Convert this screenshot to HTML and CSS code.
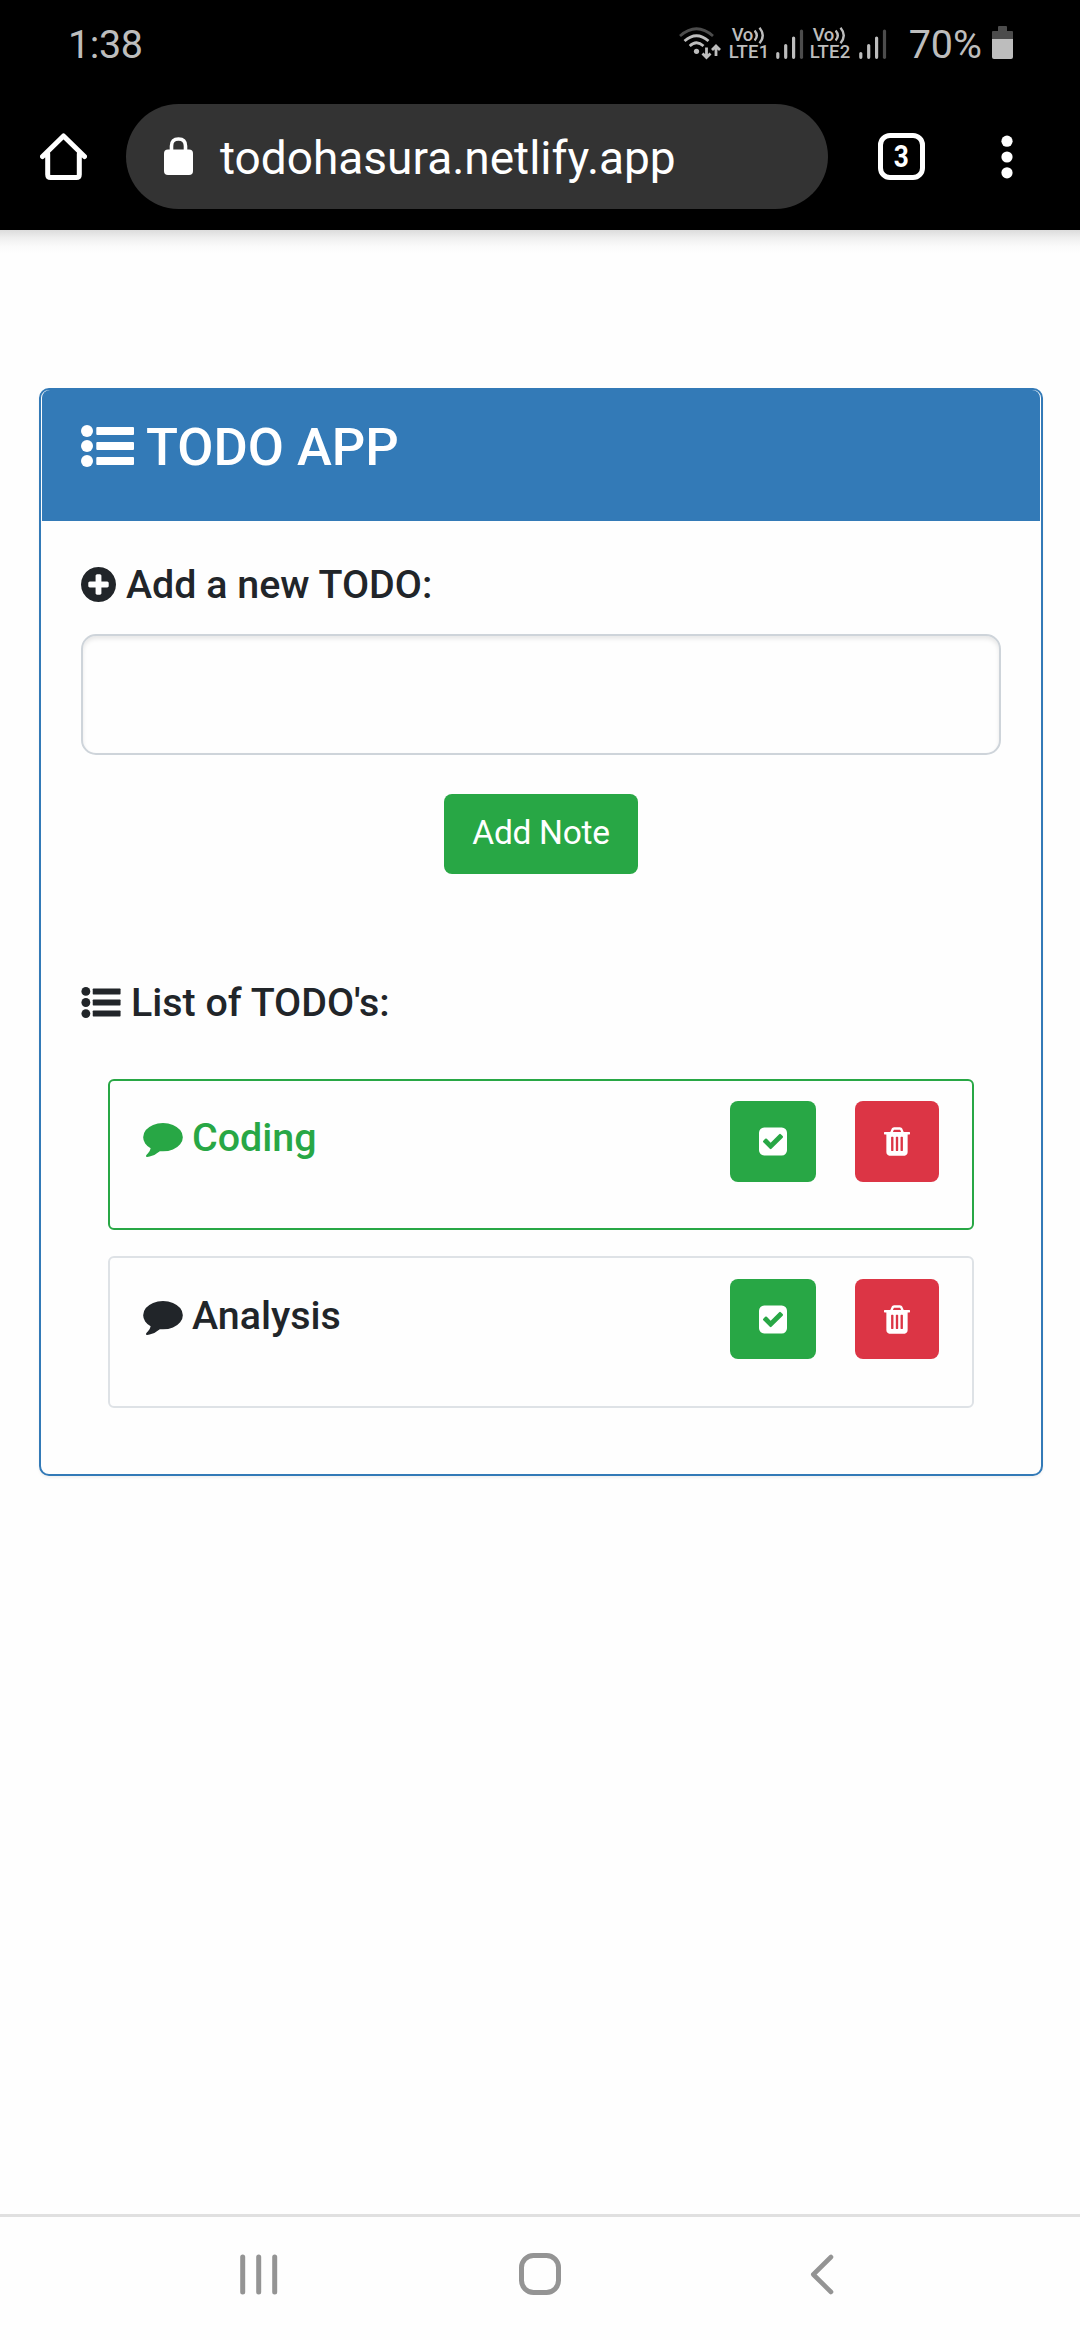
FILE: index.html
```html
<!DOCTYPE html>
<html lang="en">
<head>
<meta charset="utf-8">
<title>TODO APP</title>
<link rel="stylesheet" href="styles.css">
</head>
<body>
<svg class="defs" width="0" height="0" aria-hidden="true">
  <symbol id="list" viewBox="0 0 53 42">
    <circle cx="6" cy="6" r="6"/><circle cx="6" cy="21" r="6"/><circle cx="6" cy="36" r="6"/>
    <rect x="15.3" y="2" width="37.7" height="8" rx="1"/><rect x="15.3" y="17" width="37.7" height="8" rx="1"/><rect x="15.3" y="32" width="37.7" height="8" rx="1"/>
  </symbol>
  <symbol id="plus" viewBox="128 128 1536 1536"><path d="M1344 960v-128q0-26-19-45t-45-19h-256v-256q0-26-19-45t-45-19h-128q-26 0-45 19t-19 45v256h-256q-26 0-45 19t-19 45v128q0 26 19 45t45 19h256v256q0 26 19 45t45 19h128q26 0 45-19t19-45v-256h256q26 0 45-19t19-45zm320-64q0 209-103 385.5t-279.5 279.5-385.5 103-385.5-103-279.5-279.5-103-385.5 103-385.5 279.5-279.5 385.5-103 385.5 103 279.5 279.5 103 385.5z"/></symbol>
  <symbol id="comment" viewBox="0 256 1792 1536"><path d="M1792 896q0 174-120 321.5t-326 233-450 85.500q-70 0-145-8-198 175-460 242-49 14-114 22-17 2-30.5-9t-17.5-29v-1q-3-4-.5-12t2-10 4.5-9.500l6-9 7-8.500 8-9q7-8 31-34.500t34.500-38 31-39.500 32.500-51 27-59 26-76q-157-89-247.500-220t-90.500-281q0-174 120-321.500t326-233 450-85.500 450 85.500 326 233 120 321.500z"/></symbol>
  <symbol id="check" viewBox="128 128 1536 1536"><path d="M813 1299l614-614q19-19 19-45t-19-45l-102-102q-19-19-45-19t-45 19l-467 467-211-211q-19-19-45-19t-45 19l-102 102q-19 19-19 45t19 45l358 358q19 19 45 19t45-19zm851-883v960q0 119-84.500 203.500t-203.500 84.500h-960q-119 0-203.500-84.500t-84.500-203.500v-960q0-119 84.500-203.500t203.500-84.500h960q119 0 203.500 84.500t84.500 203.500z"/></symbol>
  <symbol id="trash" viewBox="192 128 1408 1536"><path d="M704 1376v-704q0-14-9-23t-23-9h-64q-14 0-23 9t-9 23v704q0 14 9 23t23 9h64q14 0 23-9t9-23zm256 0v-704q0-14-9-23t-23-9h-64q-14 0-23 9t-9 23v704q0 14 9 23t23 9h64q14 0 23-9t9-23zm256 0v-704q0-14-9-23t-23-9h-64q-14 0-23 9t-9 23v704q0 14 9 23t23 9h64q14 0 23-9t9-23zm-544-992h448l-48-117q-7-9-17-11h-317q-10 2-17 11zm928 32v64q0 14-9 23t-23 9h-96v948q0 83-47 143.500t-113 60.500h-832q-66 0-113-58.500t-47-141.500v-952h-96q-14 0-23-9t-9-23v-64q0-14 9-23t23-9h309l70-167q15-37 54-63t79-26h320q40 0 79 26t54 63l70 167h309q14 0 23 9t9 23z"/></symbol>
  <symbol id="bars" viewBox="0 0 28 30">
    <g stroke-width="3.2" stroke-linecap="round" stroke="#bdbdbd"><path d="M1.800 24.600v3.700M9.700 16.600v11.700M17.600 9v19.300"/><path stroke="#4c4c4c" d="M25.500 2v26.300"/></g>
  </symbol>
  <symbol id="waves" viewBox="0 0 11 17">
    <path d="M.6 3.500Q5 8.500 .6 13.500M5.500 .8Q12 8.500 5.500 16.200" fill="none" stroke="#bdbdbd" stroke-width="2.400"/>
  </symbol>
</svg>

<header class="chrome">
  <div class="status">
    <span class="clock">1:38</span>
    <div class="indicators">
      <svg class="wifi" viewBox="0 0 42 33">
        <g fill="none" stroke-width="2.800">
          <path stroke="#4c4c4c" d="M1 9Q17.500-5.500 34 9"/>
          <path stroke="#bdbdbd" d="M5.500 14Q17.500 3.500 29.500 14M10.700 19Q17.500 12.500 24.500 19M27.500 20.500v10M23.500 26.500l4 4 4-4M37 29V19M33 23l4-4 4 4"/>
        </g>
        <circle cx="17.500" cy="24.300" r="2.600" fill="#bdbdbd"/>
      </svg>
      <div class="lte"><span class="vo">Vo<svg class="waves"><use href="#waves"/></svg></span><span class="net">LTE1</span></div>
      <svg class="bars"><use href="#bars"/></svg>
      <div class="lte lte-two"><span class="vo">Vo<svg class="waves"><use href="#waves"/></svg></span><span class="net">LTE2</span></div>
      <svg class="bars"><use href="#bars"/></svg>
      <span class="percent">70%</span>
      <svg class="battery" viewBox="0 0 21 33"><path fill="#4c4c4c" d="M6 1q0-1 1-1h7q1 0 1 1v4h5q1 0 1 1v7H0V6q0-1 1-1h5z"/><path fill="#bdbdbd" d="M0 13h21v18q0 2-2 2H2q-2 0-2-2z"/></svg>
    </div>
  </div>
  <div class="toolbar">
    <svg class="home" viewBox="0 0 47 47" fill="none" stroke="#fff" stroke-width="5" stroke-linejoin="round" stroke-linecap="round"><path d="M2.500 23.500L23.500 3l21 20.500M7.700 21v20.500q0 3 3 3h25.600q3 0 3-3V21"/></svg>
    <div class="omnibox">
      <svg class="lock" viewBox="0 0 29 38"><rect y="12.500" width="29" height="25.500" rx="4" fill="#fff"/><path d="M7.500 15V9q0-7 7-7t7 7v6" fill="none" stroke="#fff" stroke-width="3.600"/></svg>
      <span class="url">todohasura.netlify.app</span>
    </div>
    <span class="tabs"><span class="tab-count">3</span></span>
    <svg class="dots" viewBox="0 0 12 44" fill="#fff"><circle cx="6" cy="6.200" r="5.600"/><circle cx="6" cy="22" r="5.600"/><circle cx="6" cy="37.800" r="5.600"/></svg>
  </div>
</header>

<main class="page">
  <section class="card">
    <h1 class="card-header"><svg class="i-list-lg"><use href="#list"/></svg><span class="title">TODO APP</span></h1>
    <div class="card-body">
      <h2 class="heading"><svg class="i-plus"><use href="#plus"/></svg><span class="text">Add a new TODO:</span></h2>
      <input class="field" type="text" aria-label="New todo">
      <button class="add">Add Note</button>
      <h2 class="heading heading-list"><svg class="i-list"><use href="#list"/></svg><span class="text">List of TODO's:</span></h2>
      <ul class="items">
        <li class="item done">
          <span class="label"><svg class="i-comment"><use href="#comment"/></svg><span class="text">Coding</span></span>
          <button class="btn btn-check" aria-label="Complete"><svg class="i-check"><use href="#check"/></svg></button>
          <button class="btn btn-trash" aria-label="Delete"><svg class="i-trash"><use href="#trash"/></svg></button>
        </li>
        <li class="item">
          <span class="label"><svg class="i-comment"><use href="#comment"/></svg><span class="text">Analysis</span></span>
          <button class="btn btn-check" aria-label="Complete"><svg class="i-check"><use href="#check"/></svg></button>
          <button class="btn btn-trash" aria-label="Delete"><svg class="i-trash"><use href="#trash"/></svg></button>
        </li>
      </ul>
    </div>
  </section>
</main>

<nav class="navbar">
  <svg class="nav-recents" viewBox="0 0 38 41" stroke="#949494" stroke-width="5" stroke-linecap="round"><path d="M2.700 3v35M18.700 3v35M34.700 3v35"/></svg>
  <svg class="nav-home" viewBox="0 0 42 42"><rect x="2.500" y="2.500" width="37" height="37" rx="12" fill="none" stroke="#949494" stroke-width="5"/></svg>
  <svg class="nav-back" viewBox="0 0 24 41" fill="none" stroke="#949494" stroke-width="4.600" stroke-linecap="round" stroke-linejoin="round"><path d="M21 3L3.300 20.500 21 38"/></svg>
</nav>
</body>
</html>
```
FILE: styles.css
```css
* { box-sizing: border-box; }

body {
  margin: 0;
  height: 2340px;
  display: flex;
  flex-direction: column;
  background: #fefefe;
  font-family: Roboto, "Liberation Sans", sans-serif;
  color: #212529;
}

svg { display: block; flex: none; fill: currentColor; }
.defs { display: none; }
button, input { font: inherit; padding: 0; }
h1, h2, ul { margin: 0; padding: 0; }

/* Browser chrome */
.chrome {
  height: 230px;
  flex: none;
  background: #000;
  color: #fff;
}

.status {
  height: 88px;
  padding: 0 67px 0 68px;
  display: flex;
  align-items: center;
  justify-content: space-between;
  color: #bdbdbd;
  font-size: 39.5px;
}

.clock { letter-spacing: -.4px; }
.indicators { display: flex; align-items: center; }
.wifi { width: 42px; height: 33px; margin: 0 8px 2px 0; fill: none; }
.lte { width: 41px; height: 34px; display: flex; flex-direction: column; font-weight: 500; }
.lte-two { width: 43px; }
.vo { height: 17px; display: flex; padding-left: 3px; font-size: 18.5px; line-height: 17px; letter-spacing: -.4px; }
.waves { width: 11px; height: 17px; margin-left: 1px; overflow: visible; }
.net { font-size: 18.5px; line-height: 17px; letter-spacing: .2px; }
.bars { width: 28px; height: 30px; margin: 0 6px 1px 6px; }
.percent { margin: 0 10px 0 16px; }
.battery { width: 21px; height: 33px; margin-bottom: 3px; }

.toolbar {
  padding: 16px 67px 0 40px;
  display: flex;
  align-items: center;
}

.home { width: 47px; height: 47px; fill: none; }

.omnibox {
  width: 702px;
  height: 105px;
  margin-left: 39px;
  padding-left: 38px;
  display: flex;
  align-items: center;
  border-radius: 53px;
  background: #333;
}

.lock { width: 29px; height: 38px; margin-bottom: 2px; }
.url { margin-left: 27px; padding-top: 3px; font-size: 46px; }

.tabs {
  width: 47px;
  height: 47px;
  margin-left: 50px;
  display: flex;
  justify-content: center;
  border: 5px solid #fff;
  border-radius: 12px;
  font-size: 32px;
  font-weight: 700;
  line-height: 37px;
}

.tab-count { transform: scaleX(.82); }

.dots { width: 12px; height: 44px; margin-left: auto; }

/* Page */
.page {
  flex: 1;
  padding: 158px 37px 0 39px;
  background: linear-gradient(#dcdcdc, #efefef 8px, #fafafa 16px, #fefefe 24px);
}

.card {
  border: 2px solid #337ab7;
  border-radius: 10px;
  background: #fefefe;
  box-shadow: 0 2px 3px rgba(0, 0, 0, .05);
}

.card-header {
  height: 131px;
  margin: 0 1px;
  padding: 26px 39px 0;
  display: flex;
  gap: 12px;
  border-radius: 8px 8px 0 0;
  background: #337ab7;
  color: #fff;
  font-size: 52.5px;
  font-weight: 500;
  line-height: 62px;
}

.i-list-lg { width: 53px; height: 42px; margin-top: 9px; }

.card-body { padding: 40px 40px 66px; }

.heading {
  height: 46px;
  display: flex;
  align-items: center;
  font-size: 39.4px;
  font-weight: 500;
  line-height: 46px;
}

.text { padding-top: 1px; }

.i-plus { width: 35px; height: 35px; margin-right: 10px; }

.field {
  display: block;
  width: 920px;
  height: 121px;
  margin-top: 27px;
  border: 2px solid #ced4da;
  border-radius: 15px;
  background: #fefefe;
  box-shadow: inset 0 3px 4px rgba(0, 0, 0, .09);
}

.add {
  display: block;
  width: 194px;
  height: 80px;
  margin: 39px auto 0;
  padding-bottom: 2px;
  border: 0;
  border-radius: 8px;
  background: #28a745;
  color: #fff;
  font-size: 33.5px;
  line-height: 78px;
  letter-spacing: -.3px;
}

.heading-list { margin-top: 105px; }
.i-list { width: 40px; height: 31px; margin-right: 10px; }

.items {
  margin: 54px 27px 0;
  display: flex;
  flex-direction: column;
  gap: 26px;
  list-style: none;
}

.item {
  height: 152px;
  padding: 21px 33px 0;
  display: flex;
  align-items: flex-start;
  border: 2px solid #dee2e6;
  border-radius: 6px;
  font-size: 39.4px;
  font-weight: 500;
  line-height: 46px;
}

.done { height: 151px; padding-top: 20px; border-color: #28a745; }
.done .label { color: #28a745; }
.label { flex: 1; padding-top: 13px; display: flex; }
.i-comment { width: 40px; height: 34px; margin: 9px 9px 0 0; }

.btn {
  height: 80px;
  display: flex;
  align-items: center;
  justify-content: center;
  border: 0;
  border-radius: 8px;
  color: #fff;
}

.done .btn { height: 81px; }
.btn-check { width: 86px; background: #28a745; }
.btn-trash { width: 84px; margin-left: 39px; background: #dc3545; }
.i-check { width: 28px; height: 29px; }
.i-trash { width: 26px; height: 29px; }

/* System navigation */
.navbar {
  height: 126px;
  padding: 37px 246px 0 240px;
  display: flex;
  align-items: flex-start;
  border-top: 3px solid #e0e0e0;
}

.nav-recents { width: 38px; height: 41px; }
.nav-home { width: 42px; height: 42px; margin: -1px 0 0 241px; }
.nav-back { width: 24px; height: 41px; margin-left: auto; fill: none; }
```
